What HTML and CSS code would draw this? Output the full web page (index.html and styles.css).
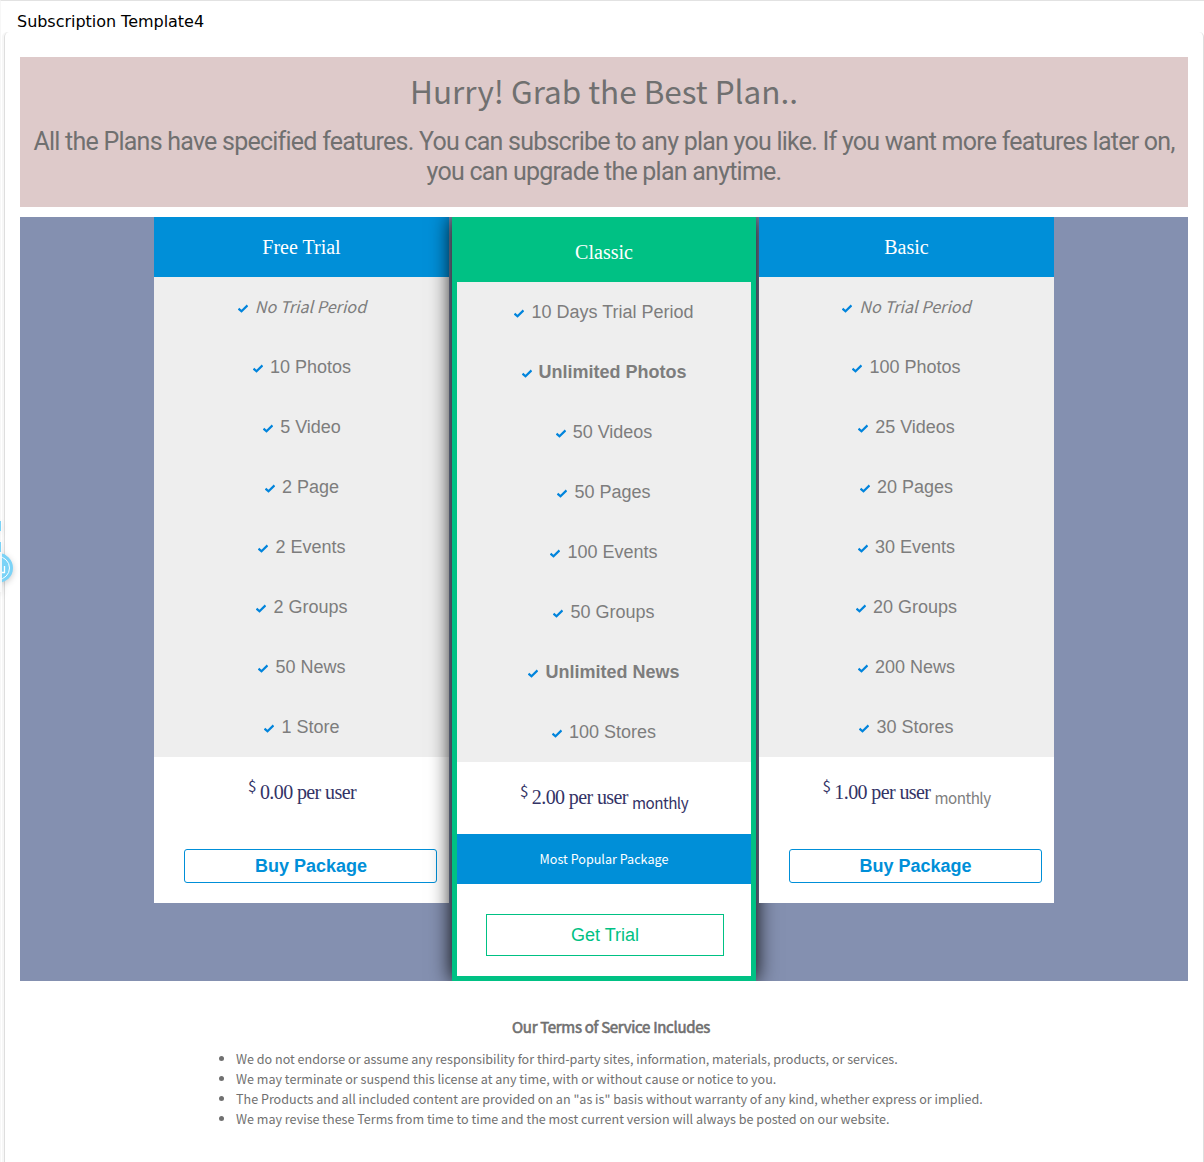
FILE: index.html
```html
<!DOCTYPE html>
<html lang="en">
<head>
<meta charset="utf-8">
<title>Subscription Template4</title>
<link rel="stylesheet" href="styles.css">
</head>
<body>
<svg class="defs" aria-hidden="true"><symbol id="check" viewBox="0.5 0 10 9"><path d="M1 4.6 4 7.3 10 1.4" fill="none" stroke="#0084dc" stroke-width="2.2"/></symbol></svg>
<header class="titlebar">Subscription Template4</header>
<main class="panel">
  <section class="intro">
    <h1>Hurry! Grab the Best Plan..</h1>
    <p>All the Plans have specified features. You can subscribe to any plan you like. If you want more features later on,<br>you can upgrade the plan anytime.</p>
  </section>
  <section class="plans">
    <article class="plan first">
      <h2>Free Trial</h2>
      <ul class="features">
        <li><svg><use href="#check"/></svg><em>No Trial Period</em></li>
        <li><svg><use href="#check"/></svg>10 Photos</li>
        <li><svg><use href="#check"/></svg>5 Video</li>
        <li><svg><use href="#check"/></svg>2 Page</li>
        <li><svg><use href="#check"/></svg>2 Events</li>
        <li><svg><use href="#check"/></svg>2 Groups</li>
        <li><svg><use href="#check"/></svg>50 News</li>
        <li><svg><use href="#check"/></svg>1 Store</li>
      </ul>
      <div class="price"><span class="currency">$</span><span class="amount">0.00 per user</span></div>
      <button class="buy">Buy Package</button>
    </article>
    <article class="plan featured">
      <h2>Classic</h2>
      <ul class="features">
        <li><svg><use href="#check"/></svg>10 Days Trial Period</li>
        <li><svg><use href="#check"/></svg><b>Unlimited Photos</b></li>
        <li><svg><use href="#check"/></svg>50 Videos</li>
        <li><svg><use href="#check"/></svg>50 Pages</li>
        <li><svg><use href="#check"/></svg>100 Events</li>
        <li><svg><use href="#check"/></svg>50 Groups</li>
        <li><svg><use href="#check"/></svg><b>Unlimited News</b></li>
        <li><svg><use href="#check"/></svg>100 Stores</li>
      </ul>
      <div class="price"><span class="currency">$</span><span class="amount">2.00 per user</span><span class="period">monthly</span></div>
      <div class="popular">Most Popular Package</div>
      <button class="trial">Get Trial</button>
    </article>
    <article class="plan last">
      <h2>Basic</h2>
      <ul class="features">
        <li><svg><use href="#check"/></svg><em>No Trial Period</em></li>
        <li><svg><use href="#check"/></svg>100 Photos</li>
        <li><svg><use href="#check"/></svg>25 Videos</li>
        <li><svg><use href="#check"/></svg>20 Pages</li>
        <li><svg><use href="#check"/></svg>30 Events</li>
        <li><svg><use href="#check"/></svg>20 Groups</li>
        <li><svg><use href="#check"/></svg>200 News</li>
        <li><svg><use href="#check"/></svg>30 Stores</li>
      </ul>
      <div class="price"><span class="currency">$</span><span class="amount">1.00 per user</span><span class="period">monthly</span></div>
      <button class="buy">Buy Package</button>
    </article>
  </section>
  <section class="terms">
    <h3>Our Terms of Service Includes</h3>
    <ul>
      <li>We do not endorse or assume any responsibility for third-party sites, information, materials, products, or services.</li>
      <li>We may terminate or suspend this license at any time, with or without cause or notice to you.</li>
      <li>The Products and all included content are provided on an "as is" basis without warranty of any kind, whether express or implied.</li>
      <li>We may revise these Terms from time to time and the most current version will always be posted on our website.</li>
    </ul>
  </section>
</main>
<svg class="badge" width="16" height="72" viewBox="0 0 16 72" aria-hidden="true">
  <path d="M0 1h1v10H0zM0 22h1v10H0z" fill="#7bd3f7"/>
  <circle cx="-2" cy="48" r="15" fill="#7bd3f7"/>
  <circle cx="-2" cy="48" r="11.5" fill="none" stroke="#fff"/>
  <path d="M2 52.500h3M4.500 53V46" stroke="#fff" stroke-width="1.3" fill="none"/>
  <path d="M0 32h2v40H0z" fill="#fafafa" opacity=".9"/>
</svg>
</body>
</html>
```
FILE: styles.css
```css
* { box-sizing: border-box; }
body {
  margin: 0;
  height: 1162px;
  overflow: hidden;
  background: #fff;
  border-top: 1px solid #e2e2e2;
  border-left: 1px solid #f7f7f7;
  color: #707070;
  font-family: "Noto Sans CJK SC", sans-serif;
}
h1, h2, h3, p, ul { margin: 0; padding: 0; font-weight: 400; }
.defs { position: absolute; width: 0; height: 0; }
.titlebar {
  height: 31px;
  padding: 11px 0 0 16px;
  color: #000;
  font: 16px/20px "DejaVu Sans", sans-serif;
  letter-spacing: -.03px;
}
.panel {
  height: 1140px;
  margin-left: 3px;
  padding: 25px 15px 0;
  border: solid #dedede;
  border-width: 0 1px;
  border-radius: 5px 5px 0 0;
  box-shadow: -2px 0 0 #f7f7f7;
}
.intro {
  height: 150px;
  padding-top: 9px;
  background: #decaca;
  text-align: center;
}
.intro h1 { font-size: 31.5px; line-height: 49px; letter-spacing: -.02px; }
.intro p {
  padding-top: 12px;
  font: 25px/30px Roboto, sans-serif;
  letter-spacing: -.76px;
  white-space: nowrap;
}
.plans {
  display: flex;
  justify-content: center;
  align-items: flex-start;
  gap: 3px;
  height: 764px;
  margin-top: 10px;
  overflow: hidden;
  background: #8490b0;
}
.plan {
  position: relative;
  width: 295px;
  height: 686px;
  background: #fff;
  text-align: center;
}
.plan h2 {
  height: 60px;
  background: #008fd8;
  color: #fff;
  font: 20px/60px "Liberation Serif", serif;
}
.featured {
  z-index: 1;
  width: 304px;
  height: 764px;
  border: 5px solid #00c184;
  box-shadow: 0 0 20px #000;
}
.featured h2 { background: #00c184; }
.last { z-index: 2; }
.features {
  list-style: none;
  background: #eee;
  color: #7d7d7d;
  font: 18px/60px "Liberation Sans", sans-serif;
}
.features li {
  display: flex;
  justify-content: center;
  align-items: center;
  gap: 7px;
  height: 60px;
}
.features svg { width: 10px; height: 9px; margin-top: 3px; }
.features em { font-family: "Noto Sans CJK SC", sans-serif; font-size: 16.2px; line-height: 58px; padding-bottom: 2px; }
.first .features li, .first .price, .first .buy { padding-left: 1px; }
.price {
  display: flex;
  justify-content: center;
  gap: 4px;
  height: 72px;
  color: #333366;
  font-size: 15.2px;
  letter-spacing: -.5px;
}
.currency { line-height: 57px; }
.amount { font: 20px/70px "Liberation Serif", serif; letter-spacing: -.6px; }
.period { line-height: 81px; }
.last .period { color: #808080; }
.buy, .trial {
  display: block;
  padding: 0;
  background: #fff;
  font: 18px "Liberation Sans", sans-serif;
}
.buy {
  width: 253px;
  height: 34px;
  margin: 20px 0 0 30px;
  border: 1px solid #008fd8;
  border-radius: 3px;
  color: #008fd8;
  font-weight: 700;
}
.popular {
  height: 50px;
  background: #008fd8;
  color: #fff;
  font-size: 12.6px;
  line-height: 50px;
}
.trial {
  width: 238px;
  height: 42px;
  margin: 30px 0 0 29px;
  border: 1px solid #00c184;
  color: #00c184;
}
.terms { padding-top: 36px; }
.terms h3 {
  padding-left: 14px;
  font-size: 15px;
  line-height: 20px;
  letter-spacing: -.3px;
  text-align: center;
  -webkit-text-stroke: .6px #707070;
}
.terms ul { margin: 12px 0 0 216px; font-size: 12.57px; line-height: 20px; }
.badge { position: absolute; left: 0; top: 520px; filter: drop-shadow(0 2px 3px #0003); }
```
